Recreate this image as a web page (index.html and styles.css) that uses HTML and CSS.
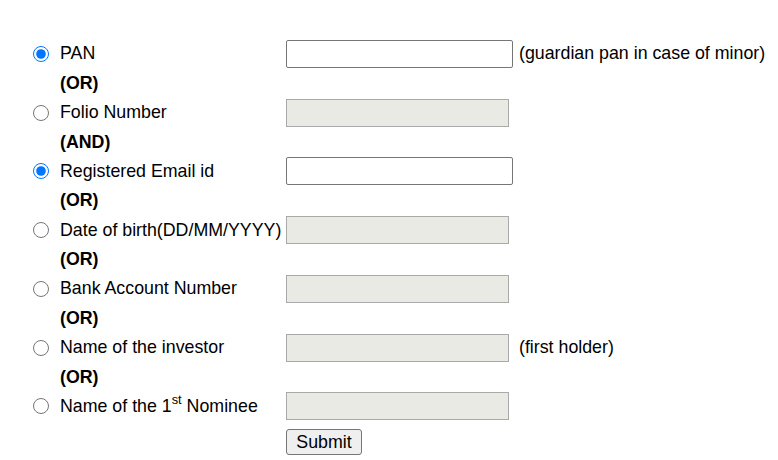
FILE: index.html
```html
<!DOCTYPE html>
<html>
<head>
<meta charset="utf-8">
<link rel="stylesheet" href="styles.css">
</head>
<body>
<form class="form">
  <table class="grid">
    <tr class="main">
      <td class="lab"><label class="opt"><input type="radio" name="a" checked><span>PAN</span></label></td>
      <td class="fld"><input type="text" class="txt"><span class="note">(guardian pan in case of minor)</span></td>
    </tr>
    <tr class="sep"><td class="lab"><b>(OR)</b></td><td></td></tr>
    <tr class="main">
      <td class="lab"><label class="opt"><input type="radio" name="a"><span>Folio Number</span></label></td>
      <td class="fld"><input type="text" class="txt off" disabled></td>
    </tr>
    <tr class="sep"><td class="lab"><b>(AND)</b></td><td></td></tr>
    <tr class="main">
      <td class="lab"><label class="opt"><input type="radio" name="b" checked><span>Registered Email id</span></label></td>
      <td class="fld"><input type="text" class="txt"></td>
    </tr>
    <tr class="sep"><td class="lab"><b>(OR)</b></td><td></td></tr>
    <tr class="main">
      <td class="lab"><label class="opt"><input type="radio" name="b"><span>Date of birth(DD/MM/YYYY)</span></label></td>
      <td class="fld"><input type="text" class="txt off" disabled></td>
    </tr>
    <tr class="sep"><td class="lab"><b>(OR)</b></td><td></td></tr>
    <tr class="main">
      <td class="lab"><label class="opt"><input type="radio" name="b"><span>Bank Account Number</span></label></td>
      <td class="fld"><input type="text" class="txt off" disabled></td>
    </tr>
    <tr class="sep"><td class="lab"><b>(OR)</b></td><td></td></tr>
    <tr class="main">
      <td class="lab"><label class="opt"><input type="radio" name="b"><span>Name of the investor</span></label></td>
      <td class="fld"><input type="text" class="txt off" disabled><span class="note wide">(first holder)</span></td>
    </tr>
    <tr class="sep"><td class="lab"><b>(OR)</b></td><td></td></tr>
    <tr class="main">
      <td class="lab"><label class="opt"><input type="radio" name="b"><span>Name of the 1<sup>st</sup> Nominee</span></label></td>
      <td class="fld"><input type="text" class="txt off" disabled></td>
    </tr>
    <tr class="act">
      <td></td>
      <td class="fld"><button type="button" class="btn">Submit</button></td>
    </tr>
  </table>
</form>
</body>
</html>
```

FILE: styles.css
```css
html, body {
  margin: 0;
  padding: 0;
  background: #fff;
}
body {
  font-family: "Liberation Sans", Arial, sans-serif;
  font-size: 17.8px;
  color: #000;
}
.form {
  padding: 39px 0 0 33px;
}
.grid {
  border-collapse: collapse;
}
.grid td {
  padding: 0;
  vertical-align: middle;
}
.lab {
  width: 253px;
  white-space: nowrap;
}
.main td {
  height: 29.75px;
}
.sep td {
  height: 29px;
}
.sep b {
  display: block;
  padding-left: 27px;
  font-weight: bold;
}
.opt {
  display: flex;
  align-items: center;
  gap: 11px;
}
.opt input {
  margin: 0;
  width: 16px;
  height: 16px;
  accent-color: #0075ff;
  flex: none;
}
.opt sup {
  font-size: 0.72em;
  line-height: 0;
  vertical-align: 0.6em;
}
.fld {
  white-space: nowrap;
  display: flex;
  align-items: center;
  gap: 5px;
  height: 29.75px;
}
.txt {
  box-sizing: border-box;
  width: 227px;
  height: 28px;
  margin: 0;
  border: 1px solid #767676;
  border-radius: 2px;
  background: #fff;
  font: inherit;
}
.txt.off {
  width: 223px;
  border-color: #a9a9a9;
  border-radius: 0;
  background: #eaeae4;
}
.note {
  padding-left: 1px;
}
.note.wide {
  padding-left: 5px;
}
.act .fld {
  height: auto;
  padding-top: 8px;
}
.btn {
  box-sizing: border-box;
  width: 76px;
  height: 26px;
  padding: 0;
  margin: 0;
  font: inherit;
  color: #000;
  background: #efefef;
  border: 1px solid #767676;
  border-radius: 3px;
}
```
